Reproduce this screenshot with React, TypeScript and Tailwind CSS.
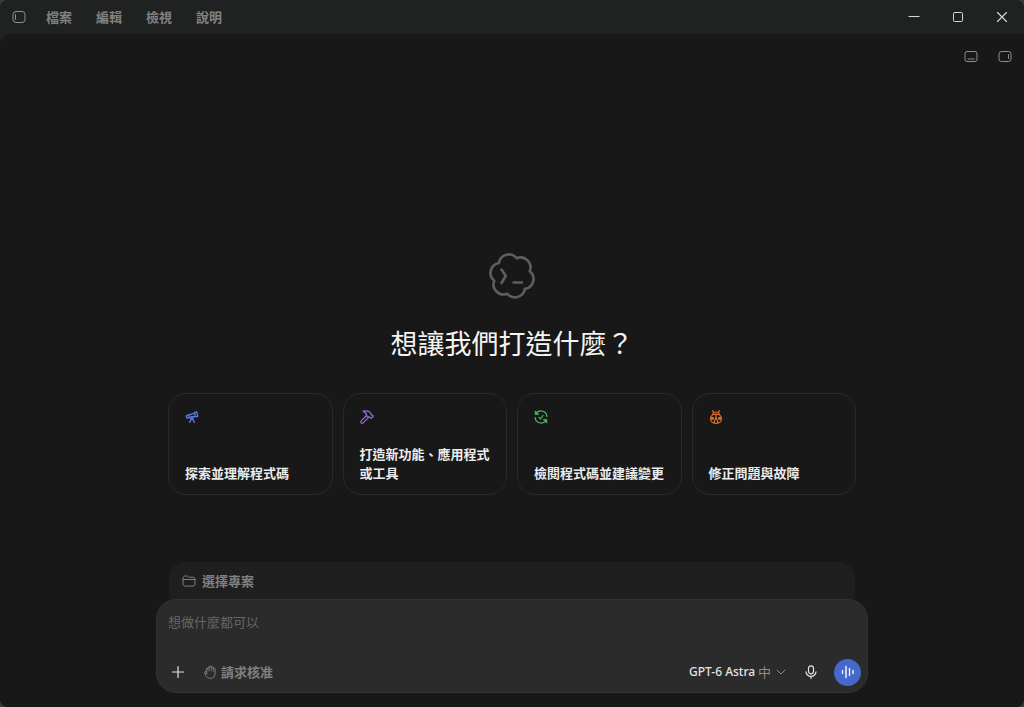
import { useState } from 'react';
import type { ReactNode, SVGProps } from 'react';
import { Telescope } from 'lucide-react';

const MENU_ITEMS = ['檔案', '編輯', '檢視', '說明'];

function Icon({ children, ...props }: SVGProps<SVGSVGElement>) {
  return (
    <svg
      width={14}
      height={14}
      viewBox="0 0 14 14"
      fill="none"
      stroke="currentColor"
      strokeLinecap="round"
      strokeLinejoin="round"
      aria-hidden="true"
      {...props}
    >
      {children}
    </svg>
  );
}

function HammerIcon() {
  return (
    <Icon strokeWidth={1.2}>
      <path d="M3.2 1.1C6 .6 8.8.9 10.5 2.6l.6 1.900 2.200 1.500-2.200 2.400-1.800-1.500H7.800L6.500 5.300C6.300 3.500 5.200 2.200 3.200 1.100z" />
      <path d="M6.600 5.500L1.200 10.900a1.400 1.400 0 0 0 2 2L8.700 7.400" />
    </Icon>
  );
}

function ReviewIcon() {
  return (
    <Icon strokeWidth={1.2}>
      <path d="M2.300 3.200A6 6 0 0 1 12.900 6.400M11.700 10.800A6 6 0 0 1 1.100 7.600" />
      <path d="M1.200 1.200v3.200h3.200zM12.800 12.800V9.600H9.600z" fill="currentColor" strokeWidth={0.8} />
      <path d="M5 7.300l1.400 1.500L9 5.500" />
    </Icon>
  );
}

function BugIcon() {
  return (
    <Icon strokeWidth={1.1}>
      <path d="M3.600.7l1 1.500M10.400.7l-1 1.500M4 4.400V3.500c0-.8.6-1.300 1.300-1.300h3.400c.7 0 1.300.5 1.300 1.300v.9" />
      <path d="M4 4.400h6c1.600 1 2.500 2.500 2.500 4.200 0 2.800-2.300 4.800-5.500 4.800S1.500 11.400 1.500 8.600c0-1.700.9-3.200 2.500-4.200z" />
      <path d="M7 4.600v2.400l-2.200 6M7 7l2.200 6" />
      <circle cx="3.400" cy="8.300" r="1" fill="currentColor" />
      <circle cx="10.600" cy="8.300" r="1" fill="currentColor" />
    </Icon>
  );
}

function LogoIcon() {
  return (
    <Icon width={48} height={48} viewBox="0 0 48 48" strokeWidth={2.6}>
      <path d="M28.700 6.200A10 10 0 0 1 41.700 19.200A10 10 0 0 1 36.900 36.900A10 10 0 0 1 19.300 41.700A10 10 0 0 1 6.300 28.700A10 10 0 0 1 11 11A10 10 0 0 1 28.700 6.200z" />
      <path d="M13.500 17.500l4.300 6.500-4.300 7M25.500 30.500h8.500" />
    </Icon>
  );
}

const suggestions: { label: string; color: string; icon: ReactNode }[] = [
  { label: '探索並理解程式碼', color: 'text-[#5b7fe8]', icon: <Telescope size={14} strokeWidth={2.2} /> },
  { label: '打造新功能、應用程式或工具', color: 'text-[#9a6be0]', icon: <HammerIcon /> },
  { label: '檢閱程式碼並建議變更', color: 'text-[#4fb864]', icon: <ReviewIcon /> },
  { label: '修正問題與故障', color: 'text-[#e8722c]', icon: <BugIcon /> },
];

function TitleBar() {
  return (
    <header className="flex h-[34px] items-center justify-between bg-[#202222] pl-3">
      <div className="flex items-center gap-5 text-[#8e8f8f]">
        <button type="button" aria-label="切換側邊欄">
          <Icon>
            <rect x="1" y="1.500" width="12" height="11" rx="3" />
            <path d="M3.500 4.500v5" />
          </Icon>
        </button>
        <nav className="flex gap-6 text-[13px] leading-5 font-semibold text-[#808181]">
          {MENU_ITEMS.map((item) => (
            <button key={item} type="button">
              {item}
            </button>
          ))}
        </nav>
      </div>
      <div className="flex text-[#d8d8d8]">
        <button type="button" aria-label="最小化" className="grid h-8 w-11 place-items-center">
          <Icon strokeLinecap="butt">
            <path d="M1.500 6.500h11" />
          </Icon>
        </button>
        <button type="button" aria-label="最大化" className="grid h-8 w-11 place-items-center">
          <Icon>
            <rect x="2.500" y="2.500" width="9" height="9" rx="1" />
          </Icon>
        </button>
        <button type="button" aria-label="關閉" className="grid h-8 w-11 place-items-center">
          <Icon strokeWidth={1.1}>
            <path d="M2.500 2.500l9 9M11.500 2.500l-9 9" />
          </Icon>
        </button>
      </div>
    </header>
  );
}

function Composer() {
  const [prompt, setPrompt] = useState('');

  return (
    <section className="w-full">
      <div className="mx-[13px] rounded-t-2xl bg-[#1f1f1f] px-[13px] py-2">
        <button
          type="button"
          className="flex items-center gap-1.5 text-[13px] leading-[21px] font-semibold text-[#808080]"
        >
          <Icon>
            <path d="M1 4.200c0-1.300.8-2.200 2.100-2.200h1.600c.6 0 1 .2 1.400.6l.6.6h4.200c1.300 0 2.100.8 2.100 2.100v4.700c0 1.300-.8 2.100-2.100 2.100H3.100C1.800 12.100 1 11.300 1 10zM1 5.500h12" />
          </Icon>
          選擇專案
        </button>
      </div>
      <form
        className="rounded-[20px] border border-[#333333] bg-[#2b2b2b] px-2 pt-2.5"
        onSubmit={(e) => e.preventDefault()}
      >
        <textarea
          aria-label="提示"
          rows={1}
          value={prompt}
          onChange={(e) => setPrompt(e.target.value)}
          placeholder="想做什麼都可以"
          className="block h-[42px] w-full resize-none px-[3px] text-[13px] leading-6 outline-none placeholder:text-[#666666]"
        />
        <div className="flex h-10 items-center justify-between">
          <div className="flex items-center gap-4.5">
            <button type="button" aria-label="新增" className="ml-1.5 text-[#e4e4e4]">
              <Icon strokeWidth={1.2}>
                <path d="M7 1.500v11M1.500 7h11" />
              </Icon>
            </button>
            <button
              type="button"
              className="flex items-center gap-1 text-[13px] leading-5 font-semibold text-[#808080]"
            >
              <Icon>
                <path d="M3.300 8.500V4.200a.85.85 0 0 1 1.700 0V2.600a.9.9 0 0 1 1.800 0V2a.9.9 0 0 1 1.800 0v.8a.9.9 0 0 1 1.800 0v1.300a.85.85 0 0 1 1.700 0v4.200c0 3-1.700 5-4.600 5-2.800 0-4.200-1.300-5-3.300L1.700 7.500c-.3-.9.800-1.400 1.300-.6l1.300 1.800" />
                <path d="M5 4v2.300M6.800 2.700v3.300M8.600 2.800v3.200M10.400 4.200v2.300" strokeWidth={0.7} />
              </Icon>
              請求核准
            </button>
          </div>
          <div className="flex items-center gap-4">
            <div className="flex items-center gap-0.5">
              <select
                aria-label="模型"
                className="appearance-none font-['Noto_Sans','Noto_Sans_CJK_TC',sans-serif] text-[12px] leading-5 font-medium text-[#e4e4e4]"
              >
                <option>GPT-6 Astra</option>
              </select>
              <select aria-label="推理強度" className="appearance-none text-[13px] leading-5 text-[#8c8c8c]">
                <option>中</option>
              </select>
              <Icon className="text-[#8c8c8c]">
                <path d="M3 5l4 4 4-4" />
              </Icon>
            </div>
            <button type="button" aria-label="語音輸入" className="text-[#e4e4e4]">
              <Icon strokeWidth={1.2}>
                <rect x="4.500" y=".8" width="5" height="8" rx="2.500" />
                <path d="M2 6.800a5 4.600 0 0 0 10 0M7 11.400v2" />
              </Icon>
            </button>
            <button
              type="button"
              aria-label="語音模式"
              className="-mr-0.5 grid size-[27px] place-items-center rounded-full bg-[#4568cc] text-white"
            >
              <Icon strokeWidth={1.4}>
                <path d="M1.500 5.500v3M5 1.500v11M8.500 3.500v7M12 5.500v3" />
              </Icon>
            </button>
          </div>
        </div>
      </form>
    </section>
  );
}

export default function App() {
  return (
    <div className="min-h-screen bg-[#3a3c3c] font-['Noto_Sans_CJK_TC',sans-serif]">
      <div className="flex min-h-screen flex-col overflow-hidden rounded-lg bg-[#202222]">
        <TitleBar />
        <main className="flex flex-1 flex-col rounded-tl-xl bg-[#181818]">
          <div className="flex justify-end gap-5 px-3 pt-4 text-[#8e8e8e]">
            <button type="button" aria-label="切換底部面板">
              <Icon>
                <rect x="1" y="1.500" width="12" height="10" rx="2" />
                <path d="M4 9h6" />
              </Icon>
            </button>
            <button type="button" aria-label="切換右側面板">
              <Icon>
                <rect x="1" y="1.500" width="12" height="10" rx="2.500" />
                <path d="M10.500 4.500v4" />
              </Icon>
            </button>
          </div>
          <div className="mx-auto flex w-full max-w-[712px] flex-1 flex-col items-center pb-3.5">
            <div className="flex flex-1 flex-col items-center justify-end text-[#5e5e5e]">
              <LogoIcon />
              <h1 className="mt-[23px] text-[27px] leading-10 text-[#f4f4f4]">想讓我們打造什麼？</h1>
            </div>
            <div className="mt-[30px] mb-[67px] grid w-full grid-cols-4 gap-2.5 px-3">
              {suggestions.map(({ label, color, icon }) => (
                <button
                  key={label}
                  type="button"
                  className="flex h-[102px] flex-col items-start justify-between rounded-[18px] border border-[#292929] pt-4 pr-3.5 pb-3 pl-4 text-left"
                >
                  <span className={color}>{icon}</span>
                  <span className="text-[13px] leading-[19px] font-semibold text-[#ececec]">{label}</span>
                </button>
              ))}
            </div>
            <Composer />
          </div>
        </main>
      </div>
    </div>
  );
}
